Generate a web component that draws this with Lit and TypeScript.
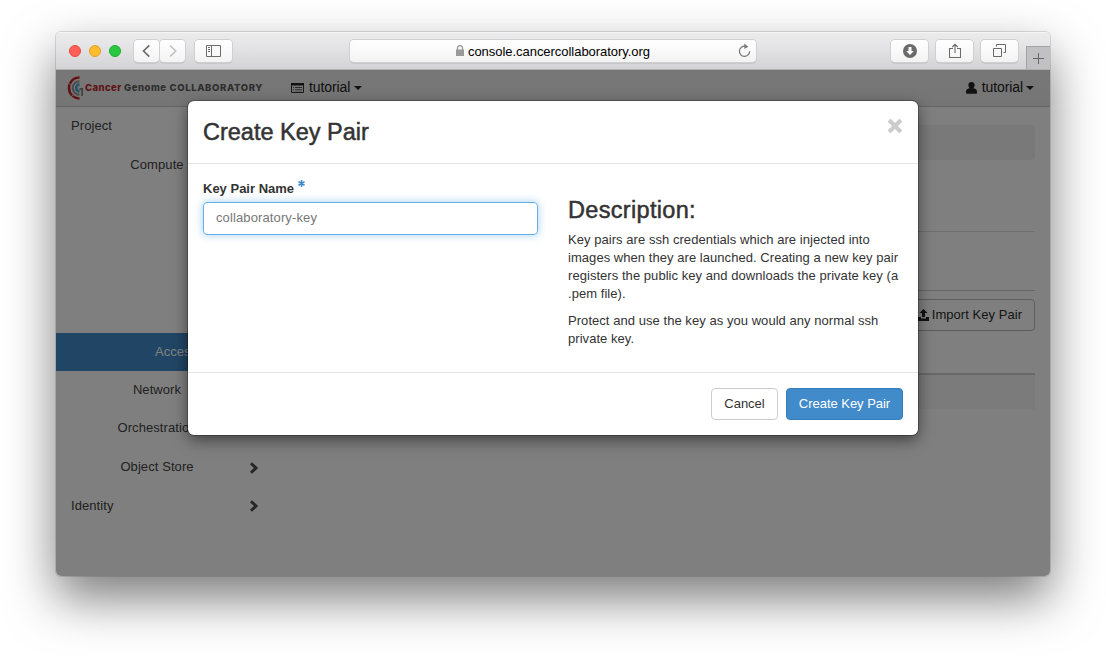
import { LitElement, html, css } from "lit";
import { customElement } from "lit/decorators.js";

const chevron = html`<svg class="chev" width="10" height="12" viewBox="0 0 10 12"><path d="M2 1.2 L7 6 L2 10.8" fill="none" stroke="#4a4a4a" stroke-width="2.9"/></svg>`;

@customElement("browser-toolbar")
class BrowserToolbar extends LitElement {
  static styles = css`
    :host { display: flex; align-items: center; height: 38px; box-sizing: border-box; padding: 0 0 0 13px;
      background: linear-gradient(#ececed, #e4e4e6 40%, #d3d3d5); border-bottom: 1px solid #b1b1b1;
      box-shadow: inset 0 1px #f5f5f5; font: 13px "Liberation Sans", Arial, sans-serif; }
    .lights { display: flex; gap: 8px; }
    .light { width: 12px; height: 12px; border-radius: 50%; box-sizing: border-box; border: 1px solid; }
    .red { background: #ff5f57; border-color: #e6483f; }
    .amber { background: #ffbd2e; border-color: #e0a023; }
    .green { background: #28c940; border-color: #1eab2c; }
    .btn { display: flex; align-items: center; justify-content: center; height: 22px; border-radius: 4px;
      background: linear-gradient(#fff, #f3f3f3); box-shadow: 0 0 0 1px #cfcfd1, 0 1.5px 0 #b9b9bb; }
    .pair { display: flex; gap: 1px; margin-left: 13px; }
    .nav { width: 25px; }
    .nav svg { margin-right: 2px; }
    .side { width: 37px; margin-left: 10px; }
    .url { flex: none; width: 406px; margin-left: 118px; position: relative; gap: 4px; color: #000; }
    .url span { padding-top: 1px; letter-spacing: -.04px; }
    .url svg:first-child { margin-left: 0; }
    .reload { position: absolute; right: 5px; top: 3px; }
    .tools { display: flex; gap: 8px; margin-left: 135px; }
    .tool { width: 37px; }
    .plus { display: flex; align-items: center; justify-content: center; align-self: flex-end; width: 24px; height: 23px;
      margin-left: auto; box-sizing: border-box; border-left: 1px solid #a3a3a3; border-top: 1px solid #a3a3a3; background: #c1c1c3; }
  `;
  render() {
    return html`
      <div class="lights"><i class="light red"></i><i class="light amber"></i><i class="light green"></i></div>
      <div class="pair">
        <div class="btn nav"><svg width="12" height="14" viewBox="0 0 12 14"><path d="M9.300 1.400 3.500 7l5.800 5.600" fill="none" stroke="#6a6a6a" stroke-width="1.600"/></svg></div>
        <div class="btn nav"><svg width="12" height="14" viewBox="0 0 12 14"><path d="M4 1.400 9.800 7 4 12.600" fill="none" stroke="#bdbdbd" stroke-width="1.400"/></svg></div>
      </div>
      <div class="btn side"><svg width="15" height="12" viewBox="0 0 15 12"><path d="M.5.5h14v11H.5zM5.500.5v11M2 2.500h2M2 4.500h2M2 6.500h2" fill="none" stroke="#6c6c6c"/></svg></div>
      <div class="btn url">
        <svg width="8" height="11" viewBox="0 0 8 11"><path d="M0 4.500h8V11H0z" fill="#999"/><path d="M1.500 5V3.100a2.500 2.500 0 0 1 5 0V5" fill="none" stroke="#999" stroke-width="1.300"/></svg>
        <span>console.cancercollaboratory.org</span>
        <svg class="reload" width="14" height="15" viewBox="0 0 14 15"><path d="M8.300 3.200A5.100 5.100 0 1 0 12.600 8.200" fill="none" stroke="#777" stroke-width="1.200"/><path d="M7.300.6 11.300 3.700 7.300 6z" fill="#777"/></svg>
      </div>
      <div class="tools">
        <div class="btn tool"><svg width="14" height="14" viewBox="0 0 14 14"><circle cx="7" cy="7" r="7" fill="#6a6a6a"/><path d="M5.500 3h3v4h2.300L7 11 3.200 7h2.300z" fill="#fff"/></svg></div>
        <div class="btn tool"><svg width="12" height="16" viewBox="0 0 12 16"><path d="M4 5.500H.5v9h11v-9H8M6 10V1.500M3.300 4 6 1.200 8.700 4" fill="none" stroke="#6a6a6a" stroke-width="1.100"/></svg></div>
        <div class="btn tool"><svg width="13" height="13" viewBox="0 0 13 13"><path d="M.5 4.500h8v8h-8zM3.500 2.500v-2h9v8H10.500" fill="none" stroke="#6a6a6a"/></svg></div>
      </div>
      <div class="plus"><svg width="11" height="11" viewBox="0 0 11 11"><path d="M5.500 0v11M0 5.500h11" stroke="#666"/></svg></div>`;
  }
}

@customElement("console-page")
class ConsolePage extends LitElement {
  static styles = css`
    :host { display: flex; flex-direction: column; height: 507px; background: #fff; color: #444; font: 13px/18px "Liberation Sans", Arial, sans-serif; }
    .bar { display: flex; align-items: center; height: 37px; box-sizing: border-box; padding: 0 16px 1px 11px;
      background: linear-gradient(#efefef, #ebebeb); border-bottom: 1px solid #c8c8c8; font-size: 14px; letter-spacing: -0.1px; color: #222; }
    .mark { margin: 1px 1px 0 0; }
    .brand { display: flex; font: 800 9.500px/12px "Inter", sans-serif; color: #5c5c5c; width: 180px; padding-top: 1px; }
    .brand b { font-weight: 800; flex: none; white-space: nowrap; }
    .w1 { color: #c1272d; width: 39px; letter-spacing: .42px; }
    .w2 { width: 45.500px; letter-spacing: .55px; }
    .w3 { letter-spacing: .63px; }
    .menu { display: flex; align-items: center; gap: 5px; }
    .menu span { line-height: 16px; padding-bottom: 1px; }
    .menu .caret { margin-left: -1px; }
    .project { margin-left: 26px; }
    .user { margin-left: auto; }
    .menu.user .caret { margin-left: -2px; }
    .caret { border: 4px solid transparent; border-top-color: #222; border-bottom: 0; }
    .body { display: flex; flex: 1; }
    nav { width: 218px; }
    .item { display: flex; align-items: center; height: 38px; padding-left: 15px; }
    .label { flex: 1; letter-spacing: .08px; }
    .sub .label { flex: none; width: 172px; padding-right: 2px; text-align: center; letter-spacing: .08px; }
    .chev { margin-right: 15px; }
    .sub .chev { margin: 1px 0 0 4px; }
    .open { margin-top: 1px; }
    .active { margin-top: 149px; padding-left: 99px; background: #428bca; color: #fff; }
    .gap { margin-top: 1px; }
    main { flex: 1; display: flex; flex-direction: column; padding: 18px 15px 0 12px; }
    .crumb { height: 35px; background: #f3f3f3; border-radius: 4px; }
    .head { height: 71px; border-bottom: 1px solid #dcdcdc; }
    .tabs { height: 58px; border-bottom: 1px solid #ccc; }
    .import { align-self: flex-end; display: flex; align-items: center; gap: 3px; height: 32px; box-sizing: border-box; padding: 0 12px;
      margin-top: 8px; border: 1px solid #bbb; border-radius: 4px; letter-spacing: .04px; color: #2c2c2c; }
    .th { height: 42px; border-bottom: 2px solid #d0d0d0; }
    .row { height: 34px; background: #f6f6f6; }
  `;
  render() {
    return html`
      <header class="bar">
        <svg class="mark" width="17" height="24" viewBox="0 0 17 24">
          <path d="M12.500 1.500A10.500 10.500 0 0 0 12.500 22.500" fill="none" stroke="#c1272d" stroke-width="2.600" stroke-dasharray="12 .6"/>
          <path d="M12.500 5.200A6.800 6.800 0 0 0 12.500 18.800" fill="none" stroke="#999" stroke-width="2.100"/>
          <path d="M12.500 8.600A3.400 3.400 0 0 0 12.500 15.400" fill="none" stroke="#4aa3d0" stroke-width="2.500"/>
          <path d="M12.500 13h2.600v7" fill="none" stroke="#888" stroke-width="1.800"/>
        </svg>
        <div class="brand"><b class="w1">Cancer</b><b class="w2">Genome</b><b class="w3">COLLABORATORY</b></div>
        <div class="menu project">
          <svg width="13" height="10" viewBox="0 0 13 10"><path d="M.5.5h12v9H.5z" fill="none" stroke="#333"/><path d="M0 0h13v2.500H0z" fill="#222"/><path d="M2 4h1v1H2zM4 4h7v1H4zM2 6h1v.8H2zM4 6h7v.8H4zM2 7.700h1v.6H2zM4 7.700h7v.6H4z" fill="#555"/></svg>
          <span>tutorial</span><i class="caret"></i>
        </div>
        <div class="menu user">
          <svg width="11" height="12" viewBox="0 0 11 12"><path d="M5.500 0C7.500 0 8.600 1.300 8.600 3S7.900 5.700 7.100 6.300C9.500 6.300 11 7.700 11 9.500V11q0 .8-.8.8H.8Q0 11.800 0 11V9.500C0 7.700 1.500 6.300 3.900 6.300 3.100 5.700 2.400 4.700 2.400 3S3.500 0 5.500 0z" fill="#222"/></svg>
          <span>tutorial</span><i class="caret"></i>
        </div>
      </header>
      <div class="body">
        <nav>
          <div class="item"><span class="label">Project</span></div>
          <div class="item sub open"><span class="label">Compute</span></div>
          <div class="item active">Access &amp; Security</div>
          <div class="item sub"><span class="label">Network</span></div>
          <div class="item sub"><span class="label">Orchestration</span></div>
          <div class="item sub gap"><span class="label">Object Store</span>${chevron}</div>
          <div class="item gap"><span class="label">Identity</span>${chevron}</div>
        </nav>
        <main>
          <div class="crumb"></div><div class="head"></div><div class="tabs"></div>
          <div class="import"><svg width="11" height="12" viewBox="0 0 11 12"><path d="M5.500 0 9.500 4H7v4H4V4H1.500zM0 8h3v1.500h5V8h3v4H0z" fill="#222"/></svg>Import Key Pair</div>
          <div class="th"></div><div class="row"></div>
        </main>
      </div>`;
  }
}

@customElement("key-pair-dialog")
class KeyPairDialog extends LitElement {
  static styles = css`
    :host { display: flex; flex-direction: column; box-sizing: border-box; width: 730px; height: 334px; background: #fff; border-radius: 6px;
      box-shadow: 0 0 0 1px rgba(0,0,0,.25), 0 5px 15px rgba(0,0,0,.5); color: #333; font: 13px/18px "Liberation Sans", Arial, sans-serif; }
    header { display: flex; justify-content: space-between; height: 63px; box-sizing: border-box; padding: 15px; border-bottom: 1px solid #e5e5e5; }
    h3 { margin: 0; font-size: 23.500px; line-height: 33px; font-weight: 400; -webkit-text-stroke: .5px #333; }
    .close { margin: 3px 1px 0 0; }
    .content { display: flex; height: 208px; border-bottom: 1px solid #e5e5e5; padding: 0 15px; }
    .form { width: 335px; padding-top: 15px; }
    .info { margin-left: 30px; width: 335px; padding-top: 30px; }
    .label { display: flex; gap: 4px; font-weight: 700; height: 23px; line-height: 20px; }
    .label svg { margin-top: 1px; }
    .field { box-sizing: border-box; height: 33px; border: 1px solid #66afe9; border-radius: 4px; padding: 0 12px; line-height: 30px; color: #777;
      box-shadow: 0 0 8px rgba(102,175,233,.6); letter-spacing: .12px; }
    .info h3 { line-height: 32px; letter-spacing: .32px; }
    p { margin: 5px 0 9px; white-space: nowrap; letter-spacing: .05px; }
    p + p { margin-top: 0; }
    footer { display: flex; justify-content: flex-end; gap: 8px; padding: 15px; }
    .btn { box-sizing: border-box; width: 67px; text-align: center; height: 32px; line-height: 30px; border: 1px solid #ccc; border-radius: 4px; white-space: nowrap; }
    .primary { width: 117px; letter-spacing: -.03px; color: #fff; background: #428bca; border-color: #357ebd; }
  `;
  render() {
    return html`
      <header><h3>Create Key Pair</h3>
        <svg class="close" width="14" height="14" viewBox="0 0 14 14"><path d="M2.600 2.600 11.400 11.400M11.400 2.600 2.600 11.400" stroke="#ccc" stroke-width="4.200" stroke-linecap="square"/></svg>
      </header>
      <section class="content">
        <div class="form">
          <div class="label">Key Pair Name<svg width="7" height="7" viewBox="0 0 7 7"><path d="M3.500 0v7M.5 1.700l6 3.600M6.500 1.700l-6 3.600" stroke="#428bca" stroke-width="1.600"/></svg></div>
          <div class="field">collaboratory-key</div>
        </div>
        <div class="info"><h3>Description:</h3>
          <p>Key pairs are ssh credentials which are injected into<br>images when they are launched. Creating a new key pair<br>registers the public key and downloads the private key (a<br>.pem file).</p>
          <p>Protect and use the key as you would any normal ssh<br>private key.</p>
        </div>
      </section>
      <footer><div class="btn">Cancel</div><div class="btn primary">Create Key Pair</div></footer>`;
  }
}

@customElement("app-root")
class AppRoot extends LitElement {
  static styles = css`
    :host { display: block; box-sizing: border-box; width: 1106px; height: 656px; padding: 32px 56px; background: #fff; overflow: hidden; }
    .window { position: relative; width: 994px; height: 544px; border-radius: 5px; box-shadow: 0 0 0 1px rgba(0,0,0,.12), 0 22px 50px rgba(0,0,0,.52); }
    .clip { height: 544px; border-radius: 5px; overflow: hidden; }
    .shade { position: absolute; inset: 38px 0 0; background: rgba(0,0,0,.5); border-radius: 0 0 5px 5px; overflow: hidden; }
    .dialog { position: absolute; left: 132px; top: 31px; }
  `;
  render() {
    return html`<div class="window">
      <div class="clip"><browser-toolbar></browser-toolbar><console-page></console-page></div>
      <div class="shade"><key-pair-dialog class="dialog"></key-pair-dialog></div>
    </div>`;
  }
}
